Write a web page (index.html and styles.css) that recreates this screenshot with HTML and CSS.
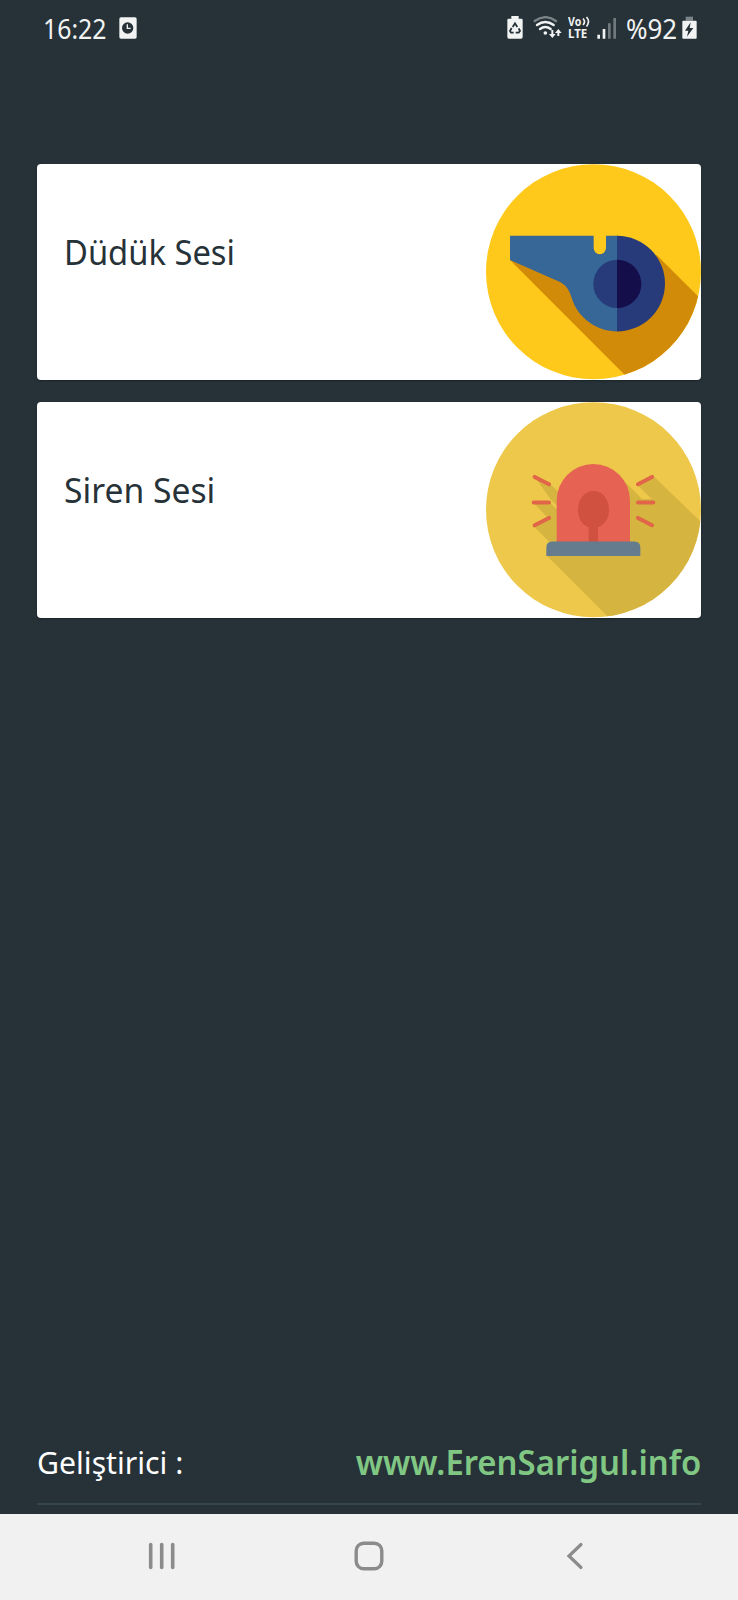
FILE: index.html
```html
<!DOCTYPE html>
<html lang="tr">
<head>
<meta charset="utf-8">
<title>Düdük</title>
<link rel="stylesheet" href="styles.css">
</head>
<body>
<div class="screen">
  <header class="status">
    <span class="time"><span class="time-text">16:22</span></span>
    <svg class="alarm" width="18" height="22" viewBox="358 50 54 66"><rect x="359" y="51" width="52" height="64" rx="5" fill="#f2f3f3"/><circle cx="384" cy="83" r="17" fill="#263238"/><path d="M383 72v12h10" fill="none" stroke="#f2f3f3" stroke-width="4"/></svg>
    <div class="status-right">
      <svg class="recycle" width="16" height="23" viewBox="51 49 48 69"><path d="M64 49h22v8h8q4 0 4 4v51q0 5-5 5H57q-5 0-5-5V61q0-4 4-4h8z" fill="#f2f3f3"/><path d="M68 82l7-11 7 11M86 86l4 8-4 5h-9M71 99h-8l-3-5 5-9" fill="none" stroke="#263238" stroke-width="5.5"/></svg>
      <svg class="wifi" width="30" height="23" viewBox="130 49 90 69" fill="none" stroke="#f2f3f3" stroke-width="7" stroke-linecap="round"><path d="M135 64q33-23 64 0" stroke="#7b8488"/><path d="M142 76q25-18 50 0M151 88q16-12 32 0"/><circle cx="167" cy="100" r="5.500" fill="#f2f3f3" stroke="none"/><path d="M188 91v16M206 95v14" stroke-width="6" stroke-linecap="butt"/><path d="M178 103h20l-10 12zM196 100h20l-10-12z" fill="#f2f3f3" stroke="none"/></svg>
      <div class="volte">
        <div class="volte-row"><span class="vo">Vo</span><svg width="8" height="11" viewBox="0 0 8 11"><path d="M1 2.500q3 3.200 0 6.500M4.500 1q4 4.500 0 9.500" fill="none" stroke="#f2f3f3" stroke-width="1.700"/></svg></div>
        <div class="volte-row"><span class="lte">LTE</span></div>
      </div>
      <svg class="signal" width="20" height="22" viewBox="322 50 60 66"><path d="M323 103h8v12h-8zM339 86h8v29h-8z" fill="#f2f3f3"/><path d="M355 69h8v46h-8zM371 53h8v62h-8z" fill="#707a7e"/></svg>
      <span class="percent"><span class="percent-text">%92</span></span>
      <svg class="charge" width="15" height="23" viewBox="576 48 45 69"><path d="M587 50h22v12h-22z" fill="#7b8488"/><rect x="577" y="62" width="43" height="54" rx="3" fill="#f2f3f3"/><path d="M602 67l-17 25h10l-4 18 19-26H599z" fill="#263238"/></svg>
    </div>
  </header>

  <main class="cards">
    <section class="card">
      <h2 class="card-title"><span class="whistle-title">Düdük Sesi</span></h2>
      <svg class="card-icon" viewBox="48 27 645 646">
        <clipPath id="c1"><circle cx="370.5" cy="350" r="322.5"/></clipPath>
        <circle cx="370.5" cy="350" r="322.5" fill="#ffc91b"/>
        <path clip-path="url(#c1)" d="M120 315L478 673H740V479L560 300 440 380z" fill="#d28b08"/>
        <path d="M120 242H371v37a18.500 18.500 0 0 0 37 0V242h34V529C382 529 330 492 309 440C302 420 297 395 270 381L120 315z" fill="#366796"/>
        <path d="M441 242a144 143.500 0 0 1 0 287z" fill="#273a7a"/>
        <path d="M442 314a72 72.500 0 0 0 0 145z" fill="#273a7a"/>
        <path d="M441 314a73 72.500 0 0 1 0 145z" fill="#140f4b"/>
      </svg>
    </section>
    <section class="card">
      <h2 class="card-title"><span class="siren-title">Siren Sesi</span></h2>
      <svg class="card-icon" viewBox="48 29.500 645 646">
        <clipPath id="c2"><circle cx="370.500" cy="352.500" r="322.500"/></clipPath>
        <circle cx="370.500" cy="352.500" r="322.500" fill="#eec84a"/>
        <g clip-path="url(#c2)" fill="#d6b440">
          <path d="M230 490L440 700H740V435L551 252 502 278 545 320H516L460 264 380 400z"/>
          <path d="M200 262L241 276 270 303V350L241 320zM191 332H241L270 361V420L241 385zM191 402L239 378 280 420V460L240 451z"/>
        </g>
        <path d="M260 450V325a110 110 0 0 1 220 0V450z" fill="#e66353"/>
        <path d="M356 450V405C335 397 324 377 324 353c0-33 20-57 47-57s46 24 46 57c0 24-12 44-33 52v45z" fill="#d15140"/>
        <path d="M229 491v-25q0-18 18-18H493q18 0 18 18v25z" fill="#647c8e"/>
        <path d="M194 254l43 22M191 331h46M194 399l43-22M546 254l-42 22M504 331h46M504 377l42 22" fill="none" stroke="#e06549" stroke-width="12" stroke-linecap="round"/>
      </svg>
    </section>
  </main>

  <footer class="credits">
    <span class="dev"><span class="dev-text">Geliştirici :</span></span>
    <a class="site"><span class="site-text">www.ErenSarigul.info</span></a>
  </footer>

  <nav class="navbar">
    <svg class="nav-icon" width="28" height="30" viewBox="0 0 28 30"><path d="M2.700 3.500v23M13.700 3.500v23M24.700 3.500v23" stroke="#8b8b8b" stroke-width="3.600" stroke-linecap="round"/></svg>
    <svg class="nav-icon nav-home" width="30" height="30" viewBox="0 0 30 30"><rect x="2.200" y="2.200" width="25.600" height="25.600" rx="7.500" fill="none" stroke="#8b8b8b" stroke-width="3.400"/></svg>
    <svg class="nav-icon" width="18" height="30" viewBox="0 0 18 30"><path d="M15 3.500L3 15l12 11.500" fill="none" stroke="#8b8b8b" stroke-width="3.200" stroke-linecap="round"/></svg>
  </nav>
</div>
</body>
</html>
```

FILE: styles.css
```css
* { box-sizing: border-box; }
body { margin: 0; background: #263238; font-family: "Noto Sans", sans-serif; }
svg { display: block; flex: none; }
.screen { width: 738px; height: 1600px; display: flex; flex-direction: column; background: #263238; }

.status { height: 164px; padding: 16px 41px 0 43px; display: flex; align-items: flex-start; color: #f2f3f3; }
.time, .percent { font-size: 27px; line-height: 26px; white-space: nowrap; }
.time { width: 76px; }
.percent { width: 55px; margin-left: 9px; }
.time-text, .percent-text { display: inline-block; transform-origin: 0 50%; }
.time-text { transform: scaleX(.92); }
.percent-text { transform: scaleX(.96); }
.alarm { margin-top: 1px; }
.status-right { margin-left: auto; display: flex; align-items: flex-start; }
.wifi { margin-left: 10px; }
.volte { width: 23px; margin-left: 5px; font-weight: 700; font-size: 12px; }
.volte-row { display: flex; height: 12px; line-height: 12px; }
.vo, .lte { display: block; transform-origin: 0 50%; white-space: nowrap; }
.vo { width: 14px; transform: scaleX(.88); }
.lte { transform: scaleX(.96); }
.signal { margin: 1px 0 0 6px; }
.charge { margin-left: 1px; }

.cards { padding: 0 37px; display: flex; flex-direction: column; gap: 22.500px; flex: 1; }
.card { height: 215.500px; display: flex; justify-content: space-between; background: #fff; border-radius: 4px; overflow: hidden; box-shadow: 0 1px 2px rgba(0, 0, 0, .3); }
.card-title { margin: 0; padding: 64px 0 0 26.500px; font-size: 35px; line-height: 48px; font-weight: 400; color: #263238; white-space: nowrap; }
.card-title span { display: inline-block; transform-origin: 0 50%; }
.whistle-title { transform: scaleX(.935); }
.siren-title { transform: scaleX(.962); }
.card-icon { width: 215px; height: 215.500px; }

.credits { margin: 0 37px 9px; height: 66px; display: flex; justify-content: space-between; border-bottom: 2px solid #34464b; white-space: nowrap; }
.dev { font-size: 31px; line-height: 46px; color: #fff; }
.dev-text { display: inline-block; transform: scaleX(.975); transform-origin: 0 50%; }
.site { font-size: 34px; line-height: 46px; font-weight: 600; color: #81c784; }
.site-text { display: inline-block; transform: scaleX(.967); transform-origin: 100% 50%; }

.navbar { height: 86px; padding: 27px 154px 0 148px; display: flex; justify-content: space-between; background: #f1f1f1; }
.nav-home { margin-right: 5px; }
```
